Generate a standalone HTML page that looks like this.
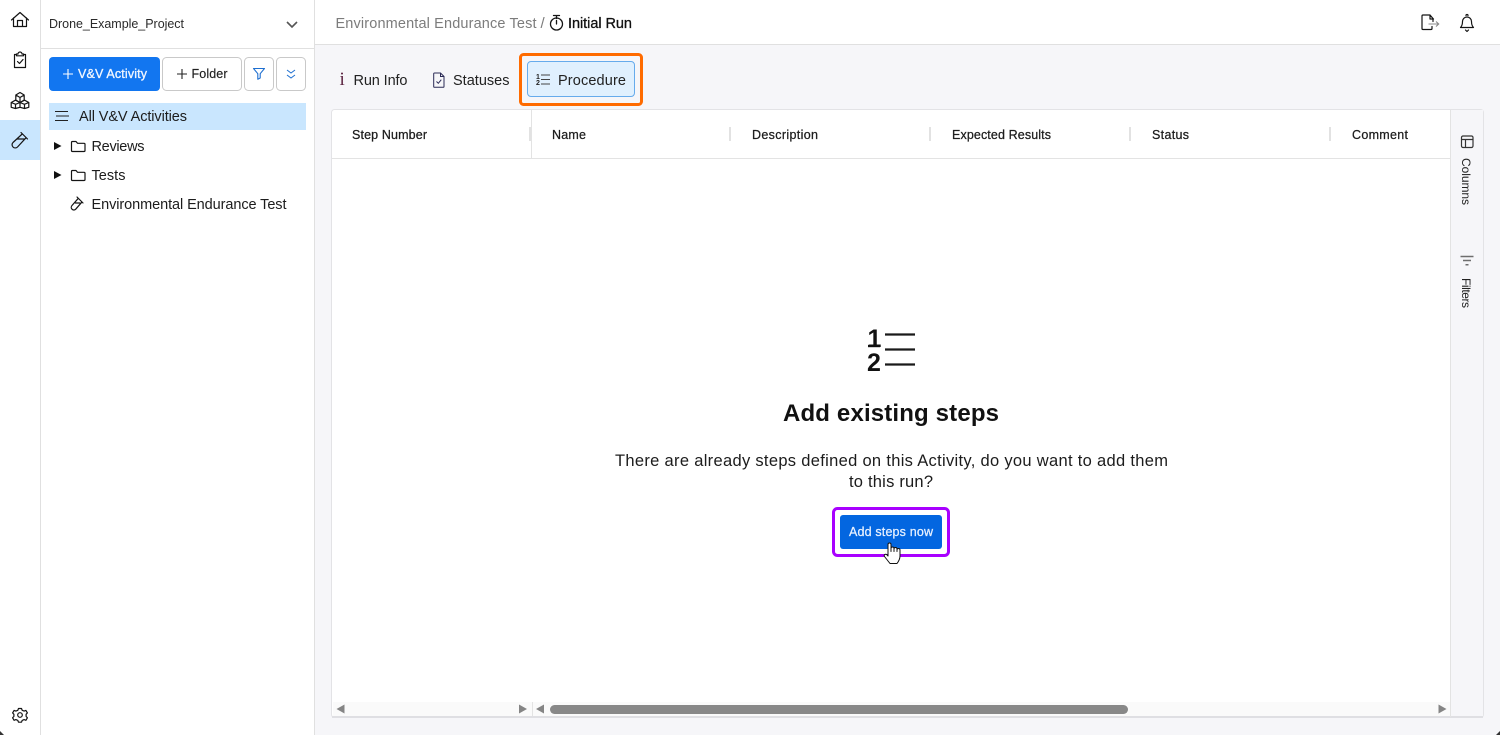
<!DOCTYPE html>
<html><head><meta charset="utf-8"><style>
html,body{margin:0;padding:0;width:1500px;height:735px;overflow:hidden;background:#fff}
svg{display:block}
text{font-family:"Liberation Sans",sans-serif;fill:#141414}
.ic{fill:none;stroke:#141414;stroke-width:1.200;stroke-linecap:round;stroke-linejoin:round}
.hd{font-size:12.500px;fill:#1c1c1c;stroke:#1c1c1c;stroke-width:.25px}
.tr{font-size:14.500px;fill:#1c1c1c}
.h{fill:#e2e2e2}
.ar{fill:#858585}
</style></head><body>
<svg width="1500" height="735" viewBox="0 0 1500 735" xmlns="http://www.w3.org/2000/svg">
<rect width="1500" height="735" fill="#fff"/>
<rect x="315" y="45" width="1185" height="690" fill="#f6f6f9"/>
<path d="M40.500 0V735M314.500 0V735M41 48.500H314M315 44.500H1500" stroke="#e0e0e0" fill="none"/>
<rect x="0" y="120" width="40" height="40" fill="#c9e6fe"/>
<path class="ic" d="M11.500 20L20 12.500l8.500 7.500M13.500 18v8.500h13V18M17.500 26.500V20.500h5v6"/>
<path class="ic" d="M16.500 54.500h-2v13h11v-13h-2M16.500 55.800V54h1.500a2 2 0 0 1 4 0h1.500v1.800zM17.500 61.500l2 2 3.500-4"/>
<path class="ic" d="M15.800 95l4.200-2.500 4.200 2.500v5l-4.200 2.500-4.200-2.500zM15.800 95l4.200 2.500 4.200-2.500M20 97.500v5M11.200 102.500l4.200-2.300 4.600 2.300v4.800l-4.600 1.200-4.200-1.200zM11.200 102.500l4.400 1.800 4.400-1.800M15.500 104.300v4.200M20 102.500l4.600-2.300 4.200 2.300v4.800l-4.200 1.200-4.600-1.200zM20 102.500l4.400 1.800 4.400-1.800M24.500 104.300v4.200"/>
<path class="ic" d="M21 132.500l6.500 6.500M22.200 134L13 142.500a3.100 3.100 0 0 0 4.500 4.500L26 137.800M17 139h7"/>
<path class="ic" d="M18.500 708.500h3l.7 1.800 1.900.8 1.800-.7 1.500 2.500-1.300 1.400v2.100l1.300 1.400-1.500 2.500-1.800-.7-1.900.8-.7 1.800h-3l-.7-1.800-1.900-.8-1.800.7-1.500-2.500 1.300-1.400v-2.100l-1.300-1.400 1.500-2.500 1.800.7 1.900-.8z"/>
<circle class="ic" cx="20" cy="715" r="2.300"/>

<text x="49" y="28" font-size="12.500" textLength="135" lengthAdjust="spacing" style="fill:#2a2a2a">Drone_Example_Project</text>
<path d="M287 22l5 5 5-5" fill="none" stroke="#555" stroke-width="1.600"/>

<rect x="49" y="57" width="111" height="34" rx="4" fill="#1276f0"/>
<path d="M68 69v10M63 74h10" stroke="#fff" stroke-width="1.100"/>
<text x="78" y="78" font-size="12.500" textLength="69" lengthAdjust="spacing" style="fill:#f2f7ff;stroke:#f2f7ff;stroke-width:.3px">V&amp;V Activity</text>
<rect x="162.500" y="57.500" width="79" height="33" rx="4" fill="#fff" stroke="#c9c9c9"/>
<path d="M182 69v10M177 74h10" stroke="#222" stroke-width="1.100"/>
<text x="191.500" y="78" font-size="12.500" textLength="36" lengthAdjust="spacing" style="fill:#222;stroke:#222;stroke-width:.15px">Folder</text>
<rect x="244.500" y="57.500" width="29" height="33" rx="4" fill="#fff" stroke="#c9c9c9"/>
<path d="M253.500 68.500h11l-4.300 5.200v4.300l-2.400 1.200v-5.500z" fill="none" stroke="#1e6fd0" stroke-width="1.100" stroke-linejoin="round"/>
<rect x="276.500" y="57.500" width="29" height="33" rx="4" fill="#fff" stroke="#c9c9c9"/>
<path d="M287 70l4 3 4-3M287 75l4 3 4-3" fill="none" stroke="#1e6fd0" stroke-width="1"/>

<rect x="49" y="103" width="257" height="27" fill="#c9e6fe"/>
<path d="M55 111.500h13M56 116h13M55 120.500h13" stroke="#222" stroke-width="1.100"/>
<text x="79" y="121" class="tr" textLength="108" lengthAdjust="spacing">All V&amp;V Activities</text>

<path d="M54 142l7.500 4-7.500 4zM54 171l7.500 4-7.500 4z" fill="#111"/>
<path class="ic" d="M71.500 150.500v-8a1 1 0 0 1 1-1h3.500l1.500 1.800h6.500a1 1 0 0 1 1 1v6.200a1 1 0 0 1-1 1h-11.500a1 1 0 0 1-1-1z"/>
<path class="ic" d="M71.500 179.500v-8a1 1 0 0 1 1-1h3.500l1.500 1.800h6.500a1 1 0 0 1 1 1v6.200a1 1 0 0 1-1 1h-11.500a1 1 0 0 1-1-1z"/>
<text x="91.500" y="151" class="tr" textLength="53" lengthAdjust="spacing">Reviews</text>
<text x="91.500" y="180" class="tr" textLength="34" lengthAdjust="spacing">Tests</text>
<path class="ic" d="M77 197l6 6M78.300 198.300L72 205.500a2.600 2.600 0 0 0 3.700 3.700L81.800 202.200M75.500 203h4.300"/>
<text x="91.500" y="209" class="tr" textLength="195" lengthAdjust="spacing">Environmental Endurance Test</text>

<text x="335.500" y="28" font-size="14.500" textLength="201" lengthAdjust="spacing" style="fill:#7c7c7c">Environmental Endurance Test</text>
<text x="540.500" y="28" font-size="15" style="fill:#7c7c7c">/</text>
<circle class="ic" cx="556.500" cy="24" r="6" style="stroke-width:1.300"/>
<path class="ic" d="M553.500 15.500h6M556.500 15.500v3M556.500 24v-3.500" style="stroke-width:1.300"/>
<text x="568" y="28" font-size="14.500" textLength="64" lengthAdjust="spacing" style="fill:#111;stroke:#111;stroke-width:.3px">Initial Run</text>

<path class="ic" d="M1423 15h7l3 3.500v3M1430 15v4h3.500M1423 15a1 1 0 0 0-1 1v12.500a1 1 0 0 0 1 1h8a1 1 0 0 0 1-1v-2"/>
<path d="M1428.500 24h10M1436 21.500l2.700 2.500-2.700 2.500" fill="none" stroke="#888" stroke-width="1.100"/>
<path class="ic" d="M1460.500 27.500c1.500-1.500 2-3 2-6a4.500 4.500 0 0 1 9 0c0 3 .5 4.500 2 6zM1466 15.500a1 1 0 0 1 2 0M1465.500 30l1.500 1.500 1.500-1.500"/>

<text x="339.500" y="85" font-size="19" style="font-family:'Liberation Serif',serif;fill:#5b2340">i</text>
<text x="353.500" y="85" font-size="14.500" textLength="54" lengthAdjust="spacing" style="fill:#222">Run Info</text>
<path d="M434.500 73h6l3.500 3.500v10a.8.800 0 0 1-.8.800h-8.700a.8.800 0 0 1-.8-.800v-12.700a.8.800 0 0 1 .8-.800zM440.500 73v3.500h3.500M436.500 81.500l1.800 1.800 3-3.600" fill="none" stroke="#2a2a55" stroke-width="1"/>
<text x="453" y="85" font-size="14.500" textLength="56.500" lengthAdjust="spacing" style="fill:#222">Statuses</text>
<rect x="520.500" y="54.500" width="121" height="50" rx="3" fill="none" stroke="#ff6b00" stroke-width="3"/>
<rect x="527.500" y="61.500" width="107" height="35" rx="3.500" fill="#e0f0fe" stroke="#66abec"/>
<text x="536" y="79" font-size="7" font-weight="700" style="fill:#222">1</text>
<text x="536" y="85" font-size="7" font-weight="700" style="fill:#222">2</text>
<path d="M541 75h9M541 79.500h9M541 84h9" stroke="#444" stroke-width="1"/>
<text x="558" y="85" font-size="14.500" textLength="68" lengthAdjust="spacing" style="fill:#222">Procedure</text>

<rect x="331.500" y="109.500" width="1152" height="608" rx="3" fill="#fff" stroke="#e3e3e6"/>
<rect x="333" y="702" width="1117" height="14" fill="#fafafa"/>
<path d="M332 717H1483" stroke="#dfdfe3" stroke-width="2"/>
<rect x="1451" y="110" width="32" height="606" fill="#f6f6f9"/>
<path d="M1450.500 110V717M531.500 110V158M332 158.500H1450M532.500 702V716" stroke="#e3e3e3" fill="none"/>
<rect x="529" y="127" width="2" height="14" class="h"/><rect x="729" y="127" width="2" height="14" class="h"/><rect x="929" y="127" width="2" height="14" class="h"/><rect x="1129" y="127" width="2" height="14" class="h"/><rect x="1329" y="127" width="2" height="14" class="h"/>
<text x="352" y="139" class="hd" textLength="75" lengthAdjust="spacing">Step Number</text>
<text x="552" y="139" class="hd" textLength="34" lengthAdjust="spacing">Name</text>
<text x="752" y="139" class="hd" textLength="66" lengthAdjust="spacing">Description</text>
<text x="952" y="139" class="hd" textLength="99" lengthAdjust="spacing">Expected Results</text>
<text x="1152" y="139" class="hd" textLength="37" lengthAdjust="spacing">Status</text>
<text x="1352" y="139" class="hd" textLength="56" lengthAdjust="spacing">Comment</text>

<rect x="1461.500" y="136" width="11.500" height="11.500" rx="1.500" fill="none" stroke="#333" stroke-width="1.200"/>
<path d="M1461.500 139.500H1473M1465.500 139.500V147.500" stroke="#333" stroke-width="1.200"/>
<text transform="translate(1462 158) rotate(90)" font-size="12" textLength="47" lengthAdjust="spacing" style="fill:#222">Columns</text>
<path d="M1460.500 256.500h13M1463 260.500h8M1465.500 264.800h3" stroke="#6e6e6e" stroke-width="1.500"/>
<text transform="translate(1462 278) rotate(90)" font-size="12" textLength="30" lengthAdjust="spacing" style="fill:#222">Filters</text>

<text x="867.500" y="347" font-size="25" font-weight="700" style="fill:#111;font-weight:700">1</text>
<path d="M868 346h12" stroke="#111" stroke-width="2.400"/>
<text x="867" y="371" font-size="25" font-weight="700" style="fill:#111;font-weight:700">2</text>
<path d="M885 334.500h30M885 349.500h30M885 364.500h30" stroke="#1a1a1a" stroke-width="2.200"/>
<text x="783" y="421" font-size="24" font-weight="700" textLength="216" lengthAdjust="spacing" style="fill:#111;font-weight:700">Add existing steps</text>
<text x="615" y="466" font-size="16.500" textLength="553" lengthAdjust="spacing" style="fill:#1c1c1c">There are already steps defined on this Activity, do you want to add them</text>
<text x="849" y="487" font-size="16.500" textLength="84" lengthAdjust="spacing" style="fill:#1c1c1c">to this run?</text>

<rect x="833.500" y="508.500" width="115" height="47" rx="4" fill="#fff" stroke="#a800ff" stroke-width="3"/>
<rect x="840" y="515" width="102" height="34" rx="3" fill="#0366e0"/>
<text x="849" y="536" font-size="12.500" textLength="84" lengthAdjust="spacing" style="fill:#e8f1ff;stroke:#e8f1ff;stroke-width:.25px">Add steps now</text>
<path d="M888 556v-11.500a1.500 1.500 0 0 1 3 0v7-3a1.500 1.500 0 0 1 3 0v3-2.500a1.500 1.500 0 0 1 3 0v2.500-1.500a1.500 1.500 0 0 1 3 0v6c0 3.500-1.500 5.500-3 7.500h-7l-5.500-7c-1-1.500.8-3 2.300-1.800z" fill="#fff" stroke="#111" stroke-width="1" stroke-linejoin="round"/>

<path class="ar" d="M344.500 704.500v9l-8-4.500zM519 704.500v9l8-4.500zM544 704.500v9l-8-4.500zM1438.500 704.500v9l8-4.500z"/>
<rect x="550" y="705" width="578" height="9" rx="4.500" fill="#888"/>
<path d="M0 731l4 4H0zM1500 731l-4 4h4z" fill="#333"/>
</svg>
</body></html>
